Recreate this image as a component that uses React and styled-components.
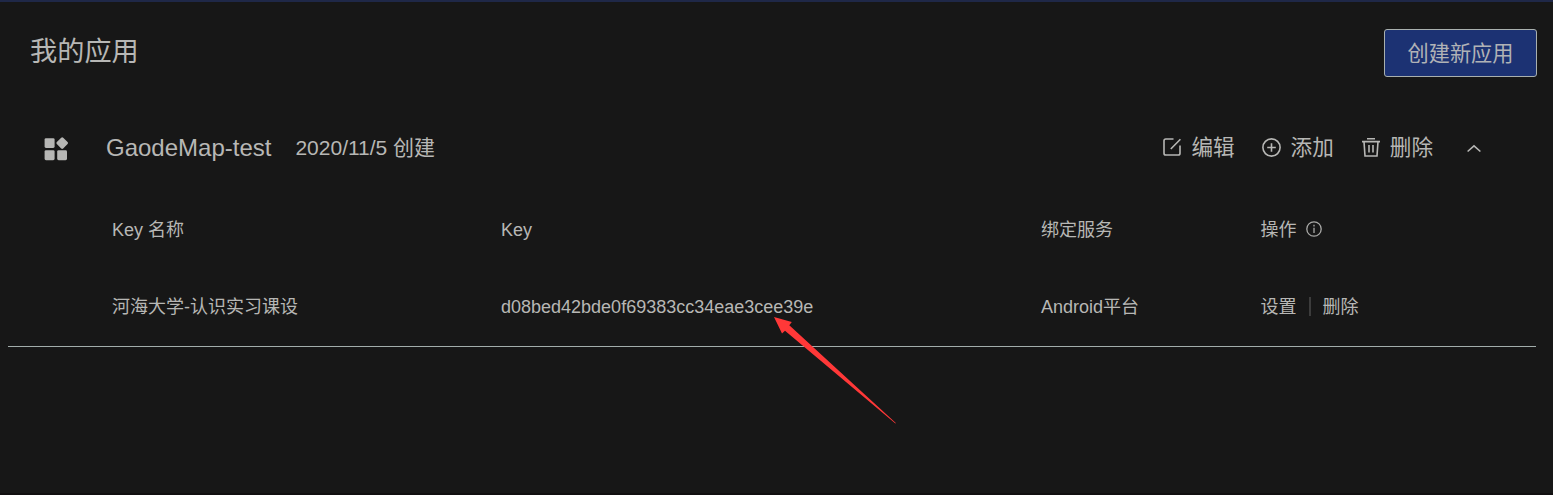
import React from "react";
import styled, { createGlobalStyle } from "styled-components";

const GlobalStyle = createGlobalStyle`
  * { box-sizing: border-box; }
  body {
    margin: 0;
    background: #171717;
    color: #b7b7b5;
    font-family: "Liberation Sans", "Noto Sans CJK SC", sans-serif;
  }
`;

const Page = styled.main`
  position: relative;
  height: 495px;
  overflow: hidden;
  border-top: 2px solid #1f2848;
  border-bottom: 2px solid #110f10;
`;

const Header = styled.header`
  display: flex;
  justify-content: space-between;
  align-items: flex-start;
  height: 100px;
  padding: 27px 16px 0 30px;
`;

const Title = styled.h1`
  margin: 1px 0 0;
  font-size: 27.2px;
  font-weight: 400;
  line-height: 44px;
`;

const CreateButton = styled.button`
  width: 153px;
  height: 48px;
  padding: 1px 0 0;
  border: 1px solid #a9b0ae;
  border-radius: 3px;
  background: #1c3273;
  color: #b0b2b6;
  font: 400 21.2px/45px "Liberation Sans", "Noto Sans CJK SC", sans-serif;
`;

const Card = styled.section`
  height: 245px;
  margin: 0 17px 0 8px;
  border-bottom: 1px solid #a2adab;
`;

const AppBar = styled.div`
  display: flex;
  align-items: center;
  height: 92px;
  padding: 0 55px 0 36px;
`;

const AppName = styled.h2`
  margin: 0 24px 0 37px;
  font-size: 24px;
  font-weight: 400;
  line-height: 32px;
`;

const Created = styled.span`
  font-size: 21px;
  line-height: 32px;
`;

const Actions = styled.div`
  display: flex;
  align-items: center;
  margin-left: auto;
`;

const Action = styled.a`
  display: flex;
  align-items: center;
  gap: ${(p) => p.$gap}px;
  margin-right: ${(p) => p.$after}px;
  font-size: 21.6px;
  line-height: 32px;
`;

const Icon = styled.svg`
  display: block;
  flex: none;
  overflow: visible;
  fill: none;
  stroke: currentColor;
  stroke-width: 1.6;
`;

const ActionIcon = styled(Icon)`
  margin-bottom: 2px;
`;

const AppIcon = styled(Icon)`
  margin-top: 2px;
  fill: currentColor;
  stroke: none;
`;

const InfoIcon = styled(Icon)`
  margin-bottom: 2px;
  color: #a9a9a7;
  stroke-width: 1.3;
`;

const Row = styled.div`
  display: grid;
  grid-template-columns: 389px 540px 219.5px 1fr;
  align-items: center;
  height: ${(p) => p.$height}px;
  padding-left: 104px;
  font-size: 18px;
  line-height: 26px;
`;

const Cell = styled.div`
  display: flex;
  align-items: center;
  gap: ${(p) => p.$gap || 0}px;
`;

const Divider = styled.i`
  width: 2px;
  height: 19px;
  background: #3c3c3c;
`;

const Pointer = styled.svg`
  position: absolute;
  left: 774px;
  top: 315px;
`;

export default function App() {
  return (
    <>
      <GlobalStyle />
      <Page>
        <Header>
          <Title>我的应用</Title>
          <CreateButton>创建新应用</CreateButton>
        </Header>
        <Card>
          <AppBar>
            <AppIcon width="25" height="24" viewBox="0 0 25 24">
              <rect x="0.6" y="1.2" width="10" height="9.8" rx="1.4" />
              <rect x="0.6" y="13.2" width="10" height="10" rx="1.4" />
              <rect x="13.2" y="13.2" width="9.8" height="10" rx="1.4" />
              <rect x="13.7" y="1.6" width="9" height="9" rx="1.4" transform="rotate(45 18.2 6.1)" />
            </AppIcon>
            <AppName>GaodeMap-test</AppName>
            <Created>2020/11/5 创建</Created>
            <Actions>
              <Action $gap={10} $after={27}>
                <ActionIcon width="18" height="18" viewBox="0 0 18 18">
                  <path d="M10.5 1H2.8Q1 1 1 2.8V15.2Q1 17 2.8 17H15.2Q17 17 17 15.2V7.5M7.8 11L17.4 1.2" />
                </ActionIcon>
                编辑
              </Action>
              <Action $gap={10} $after={28}>
                <ActionIcon width="19" height="19" viewBox="0 0 19 19">
                  <circle cx="9.5" cy="9.5" r="8.6" />
                  <path d="M9.5 5.2v8.6M5.2 9.5h8.6" />
                </ActionIcon>
                添加
              </Action>
              <Action $gap={10} $after={34}>
                <ActionIcon width="18" height="19" viewBox="0 0 18 19">
                  <path d="M5 .8h8M0 3.6h18M2 3.6L3 18H15L16 3.6M7 7v7.5M11 7v7.5" />
                </ActionIcon>
                删除
              </Action>
              <Icon width="14" height="8" viewBox="0 0 14 8">
                <path d="M.6 7.5L7 1.8L13.4 7.5" />
              </Icon>
            </Actions>
          </AppBar>
          <Row $height={72}>
            <Cell>Key 名称</Cell>
            <Cell>Key</Cell>
            <Cell>绑定服务</Cell>
            <Cell $gap={9}>
              操作
              <InfoIcon width="16" height="16" viewBox="0 0 16 16">
                <circle cx="8" cy="8" r="7.2" />
                <path d="M8 6.7v5.3M8 3.8v1.6" />
              </InfoIcon>
            </Cell>
          </Row>
          <Row $height={81}>
            <Cell>河海大学-认识实习课设</Cell>
            <Cell>d08bed42bde0f69383cc34eae3cee39e</Cell>
            <Cell>Android平台</Cell>
            <Cell $gap={12}>
              <span>设置</span>
              <Divider />
              <span>删除</span>
            </Cell>
          </Row>
        </Card>
        <Pointer width="124" height="108" viewBox="0 0 124 108">
          <path fill="#ff3838" d="M0 0L17.8 5L15.3 8.3L121.8 106L121.4 106.4L11 13.7L8 16.5Z" />
        </Pointer>
      </Page>
    </>
  );
}
